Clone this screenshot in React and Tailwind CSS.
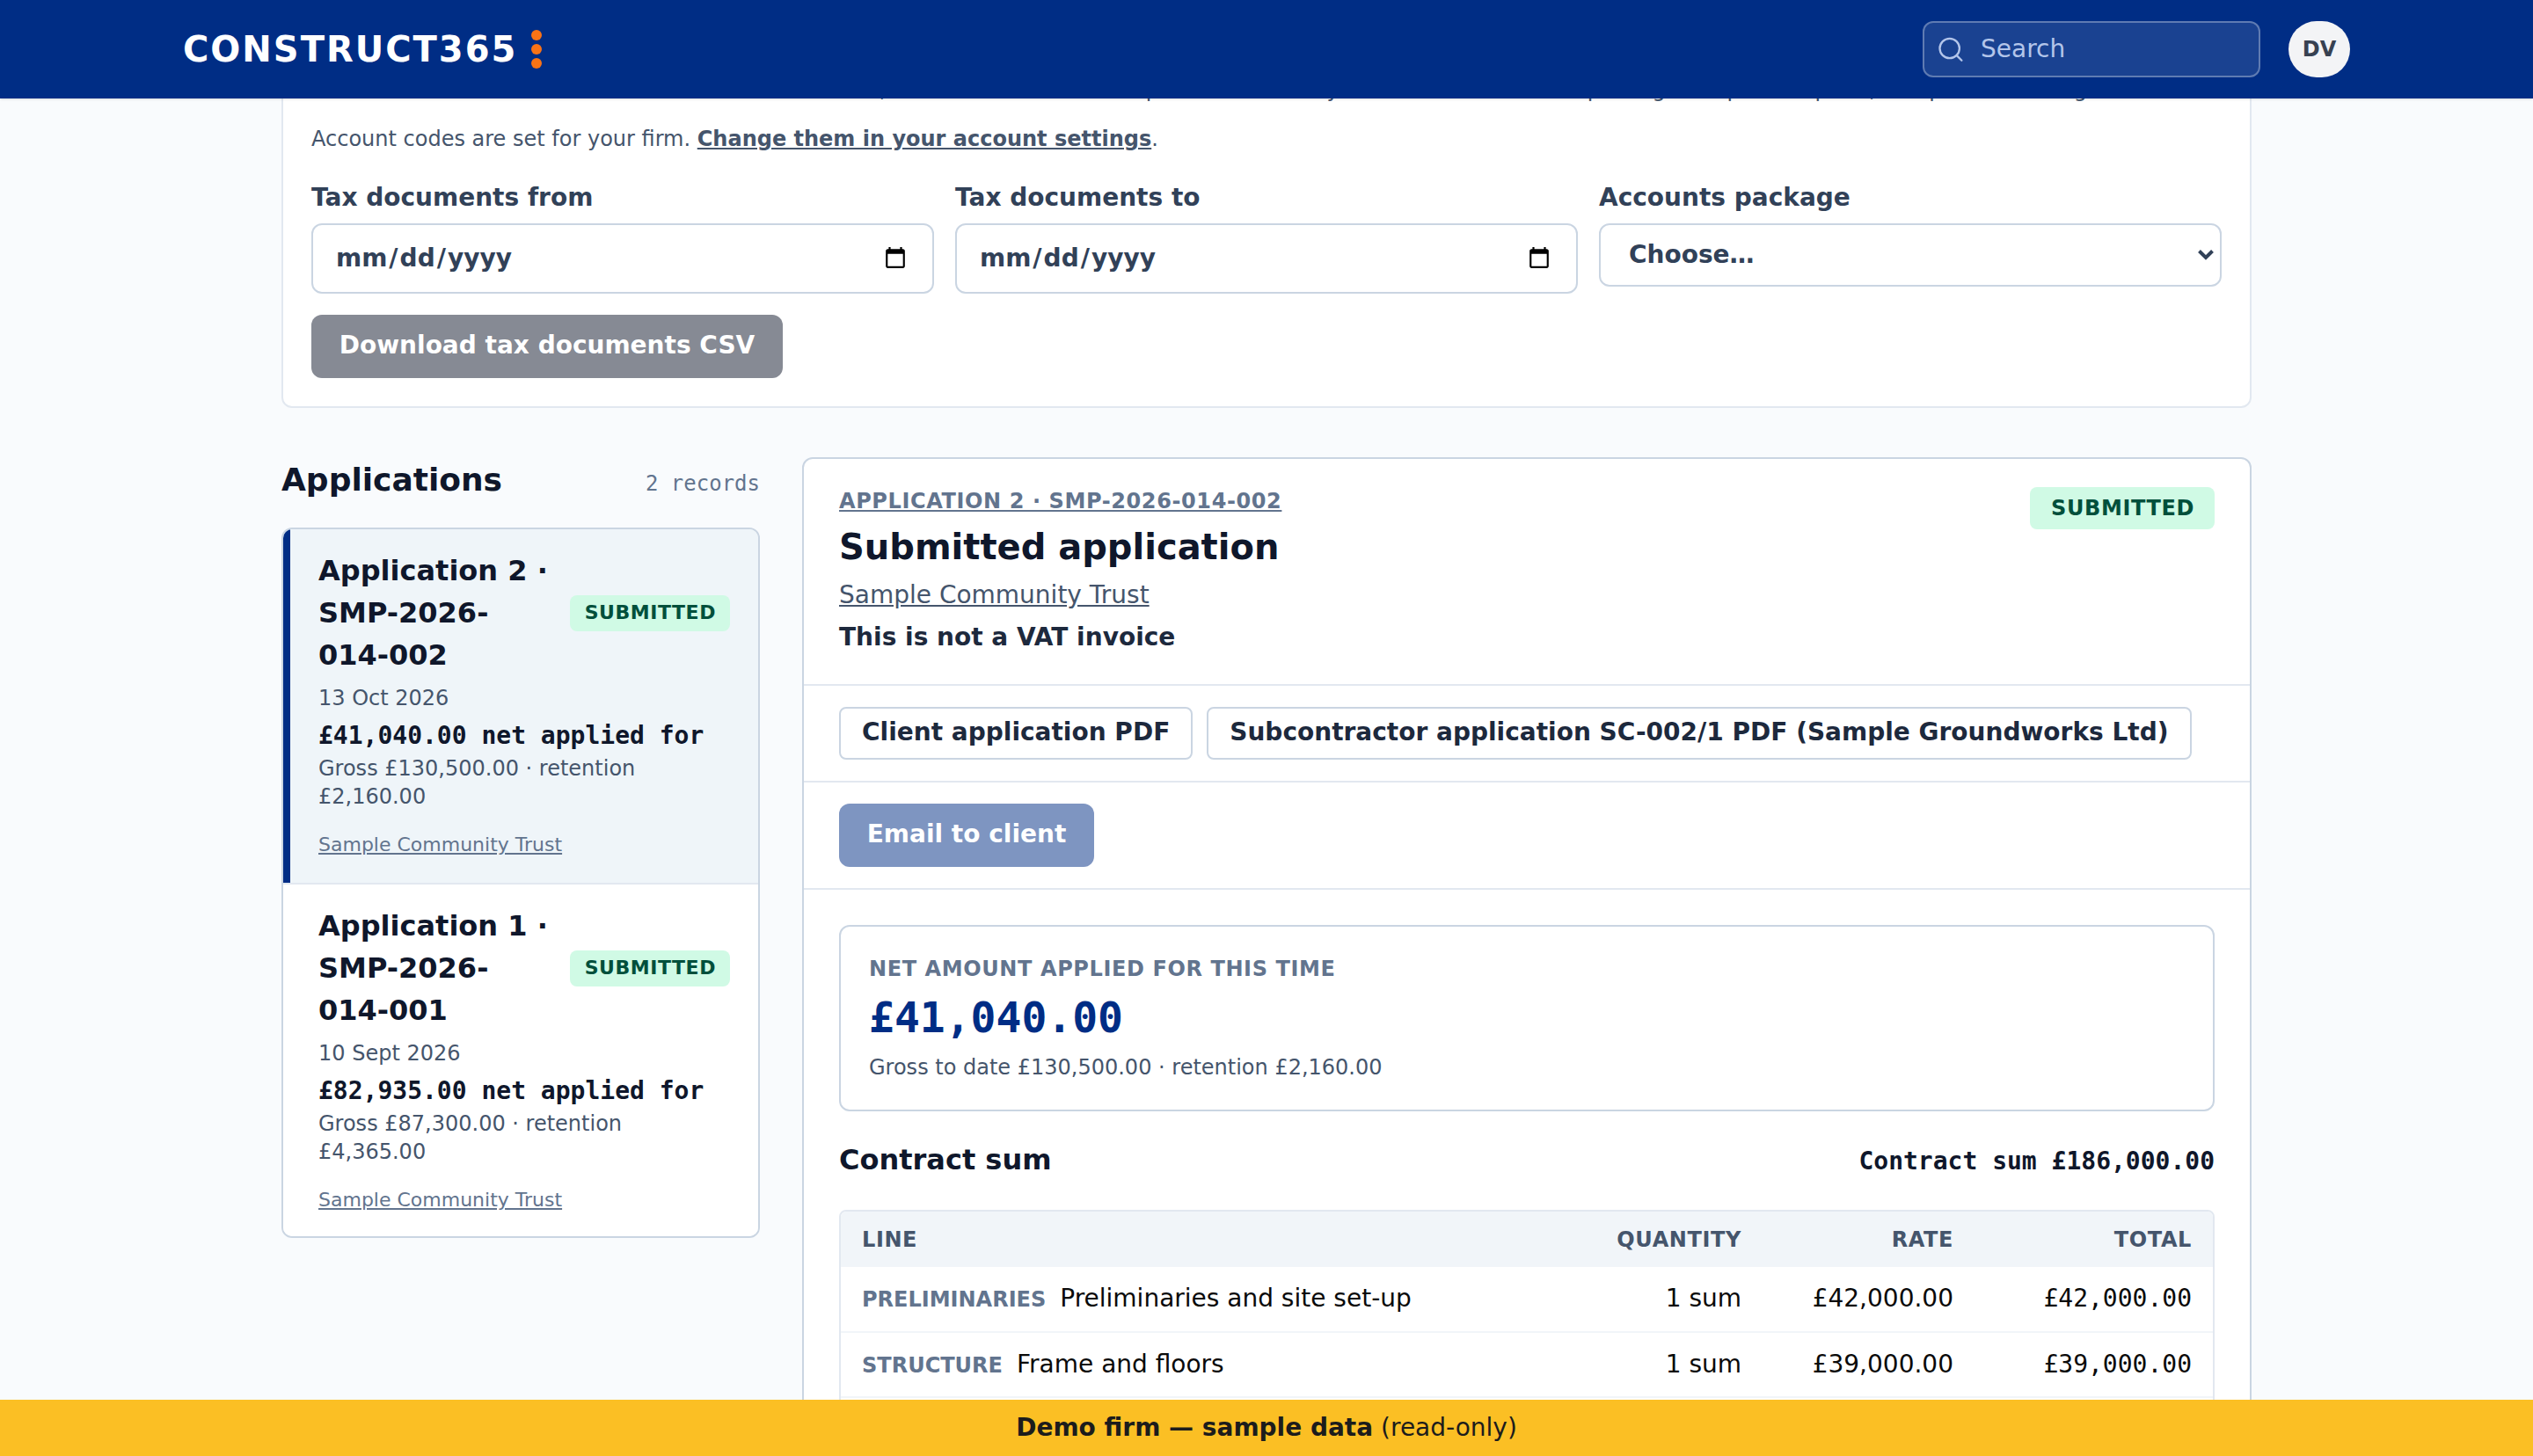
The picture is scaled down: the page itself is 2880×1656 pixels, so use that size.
import React from 'react';

const applications = [
  {
    title: 'Application 2 · SMP-2026-014-002',
    date: '13 Oct 2026',
    net: '£41,040.00 net applied for',
    gross: 'Gross £130,500.00 · retention £2,160.00',
    client: 'Sample Community Trust',
    active: true,
  },
  {
    title: 'Application 1 · SMP-2026-014-001',
    date: '10 Sept 2026',
    net: '£82,935.00 net applied for',
    gross: 'Gross £87,300.00 · retention £4,365.00',
    client: 'Sample Community Trust',
    active: false,
  },
];

const lines = [
  { group: 'Preliminaries', name: 'Preliminaries and site set-up', qty: '1 sum', rate: '£42,000.00', total: '£42,000.00' },
  { group: 'Structure', name: 'Frame and floors', qty: '1 sum', rate: '£39,000.00', total: '£39,000.00' },
];

function Header() {
  return (
    <header className="relative z-10 h-28 shrink-0 bg-[#002d85] shadow-sm">
      <div className="mx-auto flex h-full w-[2464px] items-center justify-between">
        <div className="flex items-center gap-4 text-white">
          <span className="text-[40px] leading-[56px] font-bold tracking-[0.05em]">CONSTRUCT365</span>
          <span className="flex flex-col gap-1">
            <span className="size-3 rounded-full bg-[#f97316]" />
            <span className="size-3 rounded-full bg-[#f97316]" />
            <span className="size-3 rounded-full bg-[#f97316]" />
          </span>
        </div>
        <div className="flex items-center gap-8">
          <div className="flex h-16 w-96 items-center gap-[18px] rounded-xl border-2 border-white/30 bg-white/10 pl-[14px] text-[28px] leading-10 text-[#b3c5ea]">
            <svg className="size-8" viewBox="0 0 32 32" fill="none" stroke="currentColor" strokeWidth="2.3" strokeLinecap="round">
              <circle cx="14.7" cy="15" r="11.2" />
              <path d="m22.8 23.1 5.6 5.6" />
            </svg>
            <span className="pb-px">Search</span>
          </div>
          <div className="flex h-16 w-[70px] items-center justify-center rounded-full bg-[#f3f4f6] text-2xl font-bold text-[#374151]">
            DV
          </div>
        </div>
      </div>
    </header>
  );
}

function DateField({ label }) {
  return (
    <label className="flex flex-col text-[28px] leading-10 font-bold text-slate-700">
      <span className="-mt-px mb-[9px]">{label}</span>
      <input
        type="date"
        className="h-20 rounded-xl border-2 border-slate-300 bg-white pr-6 pl-[22px] [&::-webkit-calendar-picker-indicator]:mr-0.5 [&::-webkit-datetime-edit]:p-0.5 [&::-webkit-datetime-edit-day-field]:px-0.5 [&::-webkit-datetime-edit-month-field]:px-0.5 [&::-webkit-datetime-edit-year-field]:px-0.5"
      />
    </label>
  );
}

function TaxExport() {
  return (
    <section className="-mt-10 rounded-xl border-2 border-slate-200 bg-white px-8 pb-8">
      <p className="pt-3 text-2xl leading-8 text-slate-600">
        <span className="tracking-[-0.1px]">Download tax documents issued between these dates,</span> in one CSV file with the
        period and rates your accountant uses in posting both product parts, and prices on the grid.
      </p>
      <p className="mt-6 text-2xl leading-8 text-slate-600">
        Account codes are set for your firm.{' '}
        <a className="font-bold underline">Change them in your account settings</a>.
      </p>
      <div className="mt-8 grid grid-cols-3 gap-6">
        <DateField label="Tax documents from" />
        <DateField label="Tax documents to" />
        <div className="flex flex-col text-[28px] leading-10 font-bold text-slate-700">
          <span className="-mt-px mb-[9px]">Accounts package</span>
          <div className="flex h-[72px] items-center justify-between rounded-xl border-2 border-slate-300 bg-white pr-[7px] pl-8">
            <span className="pb-px">Choose…</span>
            <svg className="h-3 w-[18px] overflow-visible" viewBox="0 0 18 12" fill="none" stroke="currentColor" strokeWidth="4">
              <path d="M1.5 1.5 9 9l7.5-7.5" />
            </svg>
          </div>
        </div>
      </div>
      <button className="mt-6 h-[72px] w-[536px] rounded-xl bg-slate-900 pb-0.5 text-[28px] leading-10 font-bold whitespace-nowrap text-white opacity-50">
        Download tax documents CSV
      </button>
    </section>
  );
}

function ApplicationItem({ app }) {
  return (
    <li
      className={
        app.active
          ? 'border-b-2 border-slate-200 bg-[#eff5f9] shadow-[inset_8px_0_0_#002d85] pt-[23px] pr-8 pb-[27px] pl-10'
          : 'bg-white pt-[23px] pr-8 pb-[25px] pl-10'
      }
    >
      <div className="flex items-center justify-between gap-4">
        <h3 className="text-[32px] leading-[48px] font-bold text-slate-900">{app.title}</h3>
        <span className="shrink-0 rounded-lg bg-emerald-100 pt-[3px] pr-4 pb-[5px] pl-[17px] text-[22px] leading-[33px] font-bold tracking-[0.025em] text-emerald-900">
          SUBMITTED
        </span>
      </div>
      <p className="mt-[9px] text-2xl leading-8 text-slate-600">{app.date}</p>
      <p className="mt-[7px] font-['DejaVu_Sans_Mono',monospace] text-[28px] leading-10 font-bold text-slate-900">{app.net}</p>
      <p className="mt-px text-2xl leading-8 text-slate-600">{app.gross}</p>
      <p className="mt-[23px] text-[22px] leading-8 text-slate-500 underline">{app.client}</p>
    </li>
  );
}

function ApplicationList() {
  return (
    <aside className="w-[544px] shrink-0">
      <div className="flex h-20 items-baseline justify-between">
        <h2 className="text-4xl leading-[52px] font-bold text-slate-900">Applications</h2>
        <span className="font-['DejaVu_Sans_Mono',monospace] text-2xl text-slate-500">2 records</span>
      </div>
      <ul className="overflow-hidden rounded-xl border-2 border-slate-300">
        {applications.map((app) => (
          <ApplicationItem key={app.title} app={app} />
        ))}
      </ul>
    </aside>
  );
}

function LineTable() {
  return (
    <div className="mt-[33px] overflow-hidden rounded-lg border-2 border-slate-200 pb-20">
      <table className="w-full text-[28px] leading-10 text-[#0a0a0a]">
        <thead className="bg-slate-100 text-2xl leading-8 tracking-[0.025em] text-slate-600">
          <tr className="h-[63px]">
            <th className="pl-6 text-left">LINE</th>
            <th className="w-[240px] pr-6 text-right">QUANTITY</th>
            <th className="w-[241px] pr-6 text-right">RATE</th>
            <th className="w-[271px] pr-6 text-right">TOTAL</th>
          </tr>
        </thead>
        <tbody>
          {lines.map((line) => (
            <tr key={line.group} className="h-[74px] border-b-2 border-slate-100">
              <td className="pb-px pl-6">
                <span className="mr-4 text-2xl font-bold text-slate-500 uppercase">{line.group}</span>
                {line.name}
              </td>
              <td className="pr-6 pb-px text-right">{line.qty}</td>
              <td className="pr-6 pb-px text-right">{line.rate}</td>
              <td className="pr-6 pb-px text-right font-['DejaVu_Sans_Mono',monospace]">{line.total}</td>
            </tr>
          ))}
        </tbody>
      </table>
    </div>
  );
}

function ApplicationDetail() {
  return (
    <article className="grow rounded-xl border-2 border-slate-300 bg-white">
      <header className="flex items-start justify-between border-b-2 border-slate-200 px-10 pt-8 pb-[33px]">
        <div>
          <p className="text-2xl leading-8 font-bold tracking-[0.025em] text-slate-500 underline">
            APPLICATION 2 · SMP-2026-014-002
          </p>
          <h2 className="mt-2 text-[40px] leading-[56px] font-bold text-slate-900">Submitted application</h2>
          <p className="mt-[7px] text-[28px] leading-10 text-slate-600 underline">Sample Community Trust</p>
          <p className="mt-2 text-[28px] leading-10 font-bold text-slate-800">This is not a VAT invoice</p>
        </div>
        <span className="rounded-lg bg-emerald-100 py-1 pr-[23px] pl-6 text-2xl leading-10 font-bold tracking-[0.025em] text-emerald-900">
          SUBMITTED
        </span>
      </header>

      <div className="flex gap-4 border-b-2 border-slate-200 px-10 py-6 text-[28px] leading-[54px] font-bold text-slate-800">
        <a className="rounded-lg border-2 border-slate-300 px-6 pb-0.5">Client application PDF</a>
        <a className="rounded-lg border-2 border-slate-300 px-6 pb-0.5">
          Subcontractor application SC-002/1 PDF (Sample Groundworks Ltd)
        </a>
      </div>

      <div className="border-b-2 border-slate-200 px-10 py-6">
        <button className="block h-[72px] w-[290px] rounded-xl bg-[#002d85] pb-0.5 text-[28px] leading-10 font-bold whitespace-nowrap text-white opacity-50">
          Email to client
        </button>
      </div>

      <div className="px-10 pt-10">
        <div className="h-[212px] rounded-xl border-2 border-slate-300 px-8 pt-8">
          <p className="text-2xl leading-8 font-bold tracking-[0.025em] text-slate-500">NET AMOUNT APPLIED FOR THIS TIME</p>
          <p className="mt-[7px] font-['DejaVu_Sans_Mono',monospace] text-5xl leading-[64px] font-bold text-[#002d85]">£41,040.00</p>
          <p className="mt-[9px] text-2xl leading-8 text-slate-600">Gross to date £130,500.00 · retention £2,160.00</p>
        </div>
        <div className="mt-[31px] flex items-baseline justify-between text-slate-900">
          <h3 className="text-[32px] leading-[48px] font-bold">Contract sum</h3>
          <span className="font-['DejaVu_Sans_Mono',monospace] text-[28px] leading-10 font-bold">Contract sum £186,000.00</span>
        </div>
        <LineTable />
      </div>
    </article>
  );
}

export default function App() {
  return (
    <div className="flex h-[1656px] w-[2880px] flex-col overflow-hidden bg-[#f9fbfd] font-['DejaVu_Sans',sans-serif]">
      <Header />
      <main className="mx-auto min-h-0 w-[2240px] grow overflow-visible">
        <TaxExport />
        <div className="mt-14 flex items-start gap-12">
          <ApplicationList />
          <ApplicationDetail />
        </div>
      </main>

      {/* Demo banner */}
      <footer className="relative z-10 h-16 shrink-0 bg-[#fbbf24] text-center text-[28px] leading-[63px] text-[#1c1c1c]">
        <strong>Demo firm — sample data</strong> (read-only)
      </footer>
    </div>
  );
}
